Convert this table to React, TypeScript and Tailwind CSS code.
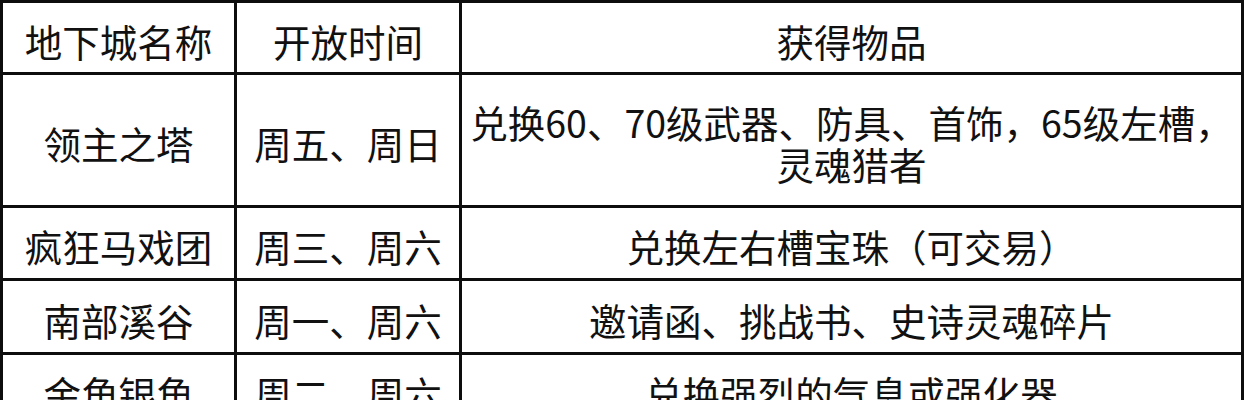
import React from "react";

const rows = [
  { name: "领主之塔", time: "周五、周日", items: "兑换60、70级武器、防具、首饰，65级左槽，\n灵魂猎者", h: "h-[133px]" },
  { name: "疯狂马戏团", time: "周三、周六", items: "兑换左右槽宝珠（可交易）", h: "h-[73px]" },
  { name: "南部溪谷", time: "周一、周六", items: "邀请函、挑战书、史诗灵魂碎片", h: "h-[74px]" },
  { name: "金角银角", time: "周二、周六", items: "兑换强烈的气息或强化器", h: "h-[73px]" },
];

const cell = "flex items-center justify-center border-r-[3px] border-b-[3px] border-[#0d0d0d] pt-[6px] text-center whitespace-pre-line";

export default function App() {
  return (
    <div className="h-[400px] w-[1244px] overflow-hidden bg-white">
      <div
        className="grid grid-cols-[234px_225px_782px] border-l-[3px] border-t-[3px] border-[#0d0d0d] text-[37.5px] leading-[42px] text-[#111]"
        style={{ fontFamily: '"Noto Sans CJK SC", "Noto Sans", sans-serif' }}
      >
        <div className={`${cell} h-[72px]`}>地下城名称</div>
        <div className={`${cell} h-[72px]`}>开放时间</div>
        <div className={`${cell} h-[72px]`}>获得物品</div>
        {rows.map((r) => (
          <React.Fragment key={r.name}>
            <div className={`${cell} ${r.h}`}>{r.name}</div>
            <div className={`${cell} ${r.h}`}>{r.time}</div>
            <div className={`${cell} ${r.h}`}>{r.items}</div>
          </React.Fragment>
        ))}
      </div>
    </div>
  );
}
